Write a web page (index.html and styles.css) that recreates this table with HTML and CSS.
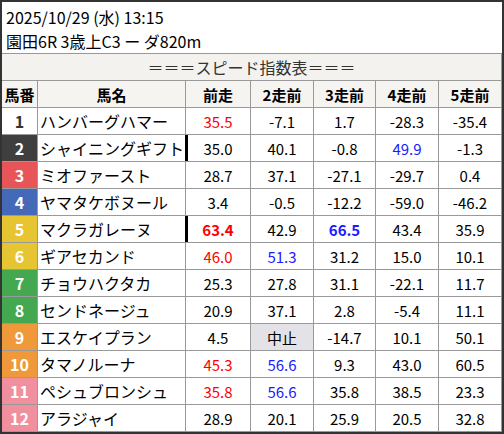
FILE: index.html
```html
<!DOCTYPE html>
<html lang="ja">
<head>
<meta charset="utf-8">
<link rel="stylesheet" href="styles.css">
</head>
<body>
<div class="frame">
  <div class="title">
    <div>2025/10/29 (水) 13:15</div>
    <div>園田6R 3歳上C3 ー ダ820m</div>
  </div>
  <div class="grid">
    <div class="band">＝＝＝スピード指数表＝＝＝</div>
    <div class="hd">馬番</div><div class="hd">馬名</div><div class="hd">前走</div><div class="hd">2走前</div><div class="hd">3走前</div><div class="hd">4走前</div><div class="hd">5走前</div>

    <div class="no w1">1</div><div class="nm">ハンバーグハマー</div><div class="v red">35.5</div><div class="v">-7.1</div><div class="v">1.7</div><div class="v">-28.3</div><div class="v">-35.4</div>
    <div class="no w2">2</div><div class="nm">シャイニングギフト</div><div class="v bar">35.0</div><div class="v">40.1</div><div class="v">-0.8</div><div class="v blue">49.9</div><div class="v">-1.3</div>
    <div class="no w3">3</div><div class="nm">ミオファースト</div><div class="v">28.7</div><div class="v">37.1</div><div class="v">-27.1</div><div class="v">-29.7</div><div class="v">0.4</div>
    <div class="no w4">4</div><div class="nm">ヤマタケボヌール</div><div class="v">3.4</div><div class="v">-0.5</div><div class="v">-12.2</div><div class="v">-59.0</div><div class="v">-46.2</div>
    <div class="no w5">5</div><div class="nm">マクラガレーヌ</div><div class="v bar red b">63.4</div><div class="v">42.9</div><div class="v blue b">66.5</div><div class="v">43.4</div><div class="v">35.9</div>
    <div class="no w5">6</div><div class="nm">ギアセカンド</div><div class="v red">46.0</div><div class="v blue">51.3</div><div class="v">31.2</div><div class="v">15.0</div><div class="v">10.1</div>
    <div class="no w7">7</div><div class="nm">チョウハクタカ</div><div class="v">25.3</div><div class="v">27.8</div><div class="v">31.1</div><div class="v">-22.1</div><div class="v">11.7</div>
    <div class="no w7">8</div><div class="nm">センドネージュ</div><div class="v">20.9</div><div class="v">37.1</div><div class="v">2.8</div><div class="v">-5.4</div><div class="v">11.1</div>
    <div class="no w9">9</div><div class="nm">エスケイプラン</div><div class="v">4.5</div><div class="v stop">中止</div><div class="v">-14.7</div><div class="v">10.1</div><div class="v">50.1</div>
    <div class="no w9">10</div><div class="nm">タマノルーナ</div><div class="v red">45.3</div><div class="v blue">56.6</div><div class="v">9.3</div><div class="v">43.0</div><div class="v">60.5</div>
    <div class="no w11">11</div><div class="nm">ペシュブロンシュ</div><div class="v red">35.8</div><div class="v blue">56.6</div><div class="v">35.8</div><div class="v">38.5</div><div class="v">23.3</div>
    <div class="no w11">12</div><div class="nm">アラジャイ</div><div class="v">28.9</div><div class="v">20.1</div><div class="v">25.9</div><div class="v">20.5</div><div class="v">32.8</div>
  </div>
</div>
</body>
</html>
```
FILE: styles.css
```css
* { box-sizing: border-box; }
html, body { margin: 0; padding: 0; background: #fff; }
body {
  font-family: "Noto Sans CJK JP", "Noto Sans", sans-serif;
  color: #000;
}
.frame {
  width: 504px;
  height: 434px;
  border: 2px solid #333;
  background: #fff;
  overflow: hidden;
}
.title {
  height: 51px;
  padding: 3px 0 0 4px;
  font-size: 16px;
  line-height: 24px;
}
.grid {
  display: grid;
  grid-template-columns: 35px 147px 64px 62px 61px 62px 62px;
  grid-auto-rows: 26px;
  gap: 1px;
  padding: 1px 0 1px 0;
  background: #999;
  width: 500px;
}
.grid > div {
  display: flex;
  align-items: center;
  justify-content: center;
  background: #fff;
  font-size: 15px;
  white-space: nowrap;
  position: relative;
}
.band {
  grid-column: 1 / -1;
  background: #f3f2ee !important;
  font-size: 16px !important;
  color: #333;
}
.hd {
  background: #f5f4f0 !important;
  font-weight: bold;
  font-size: 15px;
}
.no { font-weight: bold; color: #fff; font-size: 16px !important; }
.w1 { color: #333; }
.w2 { background: #3f3f3f !important; }
.w3 { background: #e85558 !important; }
.w4 { background: #4469b9 !important; }
.w5 { background: #e7c431 !important; }
.w7 { background: #43a84f !important; }
.w9 { background: #f0993b !important; }
.w11 { background: #f0909f !important; }
.grid > .nm {
  justify-content: flex-start;
  padding-left: 2px;
  font-size: 16px;
}
.red { color: #ff0000; }
.blue { color: #1a1aff; }
.b { font-weight: bold; }
.stop { background: #e3e3e7 !important; }
.bar::before {
  content: "";
  position: absolute;
  left: -1px;
  top: 0;
  bottom: 0;
  width: 3px;
  background: #000;
}
```
